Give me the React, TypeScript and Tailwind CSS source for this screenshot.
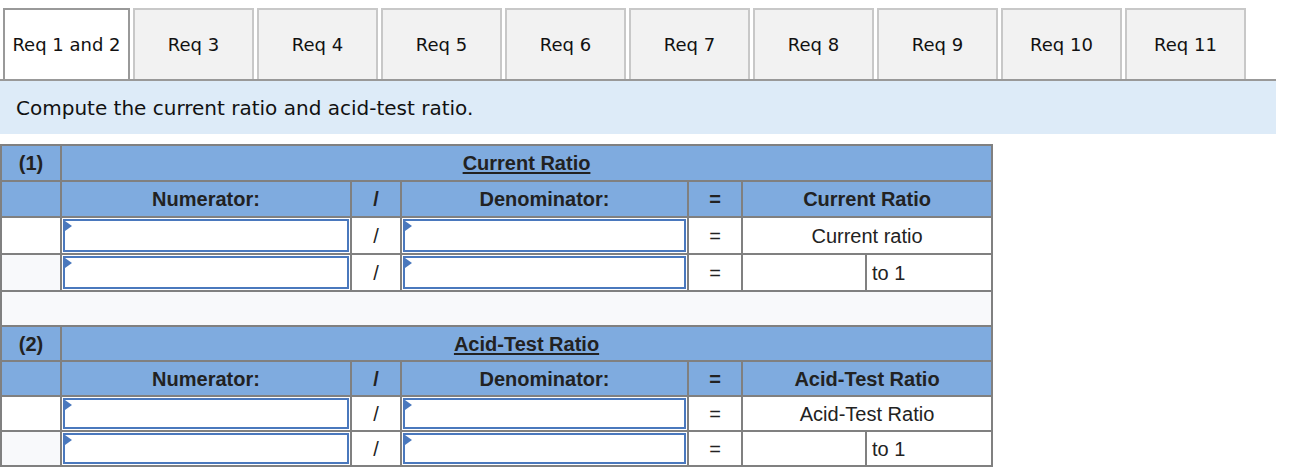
import React from 'react'

const tabs = ['Req 1 and 2', 'Req 3', 'Req 4', 'Req 5', 'Req 6', 'Req 7', 'Req 8', 'Req 9', 'Req 10', 'Req 11']

// dropdown-style answer box with the little blue marker in its corner
function AnswerBox({ tall }: { tall: boolean }) {
  return (
    <div className={`relative w-full border-2 border-[#4a78bd] bg-white ${tall ? 'h-[33px]' : 'h-[31px]'}`}>
      <span className="absolute left-0 top-0 h-0 w-0 border-y-[5px] border-l-[7px] border-y-transparent border-l-[#4a78bd]" />
    </div>
  )
}

const cell = 'border-2 border-[#808080] text-center align-middle'

type SectionProps = {
  num: string
  title: string
  resultLabel: string
  resultText: string
  tall: boolean
}

function Section({ num, title, resultLabel, resultText, tall }: SectionProps) {
  const rowH = tall ? 'h-[36px]' : 'h-[35px]'
  return (
    <>
      <tr className={`${rowH} bg-[#7fabdf] font-bold text-[#222]`}>
        <td className={cell}>{num}</td>
        <td className={cell} colSpan={6}>
          <span className="underline underline-offset-2">{title}</span>
        </td>
      </tr>
      <tr className={`${rowH} bg-[#7fabdf] font-bold text-[#222]`}>
        <td className={cell}></td>
        <td className={cell}>Numerator:</td>
        <td className={cell}>/</td>
        <td className={cell}>Denominator:</td>
        <td className={cell}>=</td>
        <td className={cell} colSpan={2}>{resultLabel}</td>
      </tr>
      <tr className={`${rowH} bg-white text-[#222]`}>
        <td className={cell}></td>
        <td className={`${cell} p-px`}><AnswerBox tall={tall} /></td>
        <td className={cell}>/</td>
        <td className={`${cell} p-px`}><AnswerBox tall={tall} /></td>
        <td className={cell}>=</td>
        <td className={cell} colSpan={2}>{resultText}</td>
      </tr>
      <tr className={`${rowH} bg-white text-[#222]`}>
        <td className={`${cell} bg-[#f8f9fb]`}></td>
        <td className={`${cell} p-px`}><AnswerBox tall={tall} /></td>
        <td className={cell}>/</td>
        <td className={`${cell} p-px`}><AnswerBox tall={tall} /></td>
        <td className={cell}>=</td>
        <td className={cell}></td>
        <td className={`${cell} pl-[5px] text-left`}>to 1</td>
      </tr>
    </>
  )
}

export default function App() {
  return (
    <div className="w-[1276px] bg-white">
      {/* Requirement tabs */}
      <div className="flex gap-[3px] pl-[3px] pt-[8px] font-['DejaVu_Sans',sans-serif] text-[18px] text-[#111]">
        {tabs.map((t, i) => (
          <div
            key={t}
            className={
              i === 0
                ? 'flex h-[71px] w-[127px] items-center justify-center border-2 border-b-0 border-[#999] bg-white'
                : 'flex h-[71px] w-[121px] items-center justify-center border-2 border-b-0 border-[#c8c8c8] bg-[#f2f2f2]'
            }
          >
            {t}
          </div>
        ))}
      </div>
      <div className="h-[2px] bg-[#999]" />
      <div className="flex h-[53px] items-center bg-[#ddebf8] pl-[16px] font-['DejaVu_Sans',sans-serif] text-[20px] text-[#111]">
        Compute the current ratio and acid-test ratio.
      </div>

      {/* Ratio worksheet */}
      <table className="mt-[10px] w-[991px] table-fixed border-collapse font-['Liberation_Sans',Arial,sans-serif] text-[20px]">
        <colgroup>
          <col className="w-[60px]" />
          <col className="w-[290px]" />
          <col className="w-[50px]" />
          <col className="w-[287px]" />
          <col className="w-[54px]" />
          <col className="w-[124px]" />
          <col className="w-[126px]" />
        </colgroup>
        <tbody>
          <Section num="(1)" title="Current Ratio" resultLabel="Current Ratio" resultText="Current ratio" tall />
          <tr className="h-[35px] bg-[#f8f9fb]">
            <td className="border-2 border-[#808080]" colSpan={7}></td>
          </tr>
          <Section num="(2)" title="Acid-Test Ratio" resultLabel="Acid-Test Ratio" resultText="Acid-Test Ratio" tall={false} />
        </tbody>
      </table>
    </div>
  )
}
